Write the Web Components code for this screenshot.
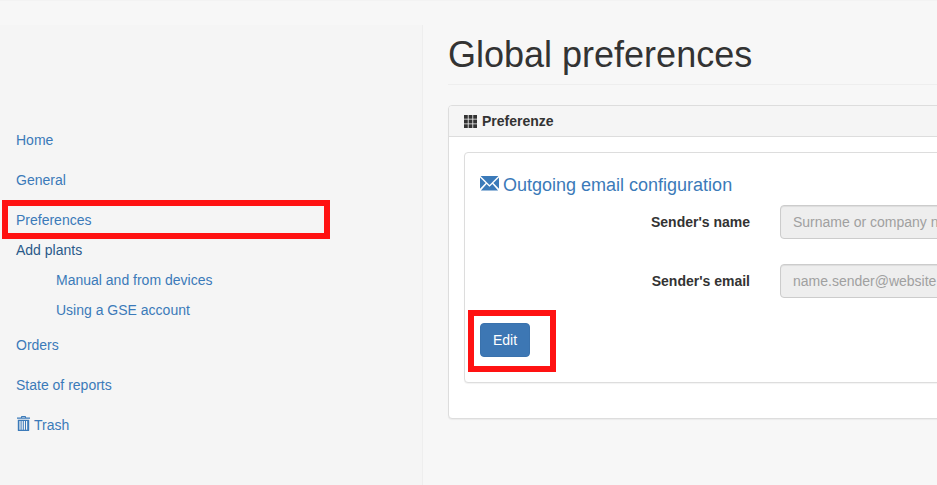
<!DOCTYPE html>
<html>
<head>
<meta charset="utf-8">
<title>Global preferences</title>
<style>
    html, body {
        margin: 0;
        height: 100%;
        overflow: hidden;
        background: #f7f7f7;
        color: #333;
        font: 14px/20px "Liberation Sans", Arial, sans-serif;
    }
</style>
</head>
<body>
<app-shell>
    <side-nav slot="side">
        <nav-item label="Home"></nav-item>
        <nav-item label="General"></nav-item>
        <nav-item label="Preferences" marked></nav-item>
        <nav-item label="Add plants" kind="open"></nav-item>
        <nav-item label="Manual and from devices" kind="sub"></nav-item>
        <nav-item label="Using a GSE account" kind="sub"></nav-item>
        <nav-item label="Orders" kind="after-sub"></nav-item>
        <nav-item label="State of reports"></nav-item>
        <nav-item label="Trash"><app-icon name="trash" slot="icon"></app-icon></nav-item>
    </side-nav>
    <page-title>Global preferences</page-title>
    <outer-panel heading="Preferenze">
        <email-settings>
            <form-row label="Sender's name" hint="Surname or company name"></form-row>
            <form-row label="Sender's email" hint="name.sender@website.com"></form-row>
        </email-settings>
    </outer-panel>
</app-shell>

<script>
const icons = {
    th: `<svg viewBox="0 0 13 13" width="13" height="13" fill="currentColor">
            <path d="M0 0h3.8v3.8H0zM4.6 0h3.8v3.8H4.6zM9.2 0H13v3.8H9.2zM0 4.6h3.8v3.8H0zM4.6 4.6h3.8v3.8H4.6zM9.2 4.6H13v3.8H9.2zM0 9.2h3.8V13H0zM4.6 9.2h3.8V13H4.6zM9.2 9.2H13V13H9.2z"/>
        </svg>`,
    envelope: `<svg viewBox="0 0 19 16" width="19" height="16" fill="currentColor">
            <path d="M.6 0h17.8L9.5 9z"/>
            <path d="M0 1.4v11.4L5.6 7z"/>
            <path d="M19 1.4v11.4L13.4 7z"/>
            <path d="M.9 14.4h17.2L12.4 8 9.5 10.8 6.6 8z"/>
        </svg>`,
    trash: `<svg viewBox="0 0 14 16" width="14" height="16" fill="currentColor">
            <path d="M5.4 0h4.2l.6 1.6H14v1.2H1V1.6h3.8zM6.2 .9h2.6l.2.7H6z" fill-rule="evenodd"/>
            <path d="M1.8 3.8h11.4v10.6c0 .4-.3.7-.7.7h-10c-.4 0-.7-.3-.7-.7zM3.4 5.1v8.7h1.2V5.1zM5.6 5.1v8.7h1.2V5.1zM7.8 5.1v8.7H9V5.1zM10 5.1v8.7h1.2V5.1z" fill-rule="evenodd"/>
        </svg>`
};

class AppIcon extends HTMLElement {
    connectedCallback() {
        this.attachShadow({ mode: 'open' });
        this.shadowRoot.innerHTML = `
            <style>
                :host { display: inline-block; line-height: 0; }
                svg { display: block; }
            </style>
            ${icons[this.getAttribute('name')]}
        `;
    }
}

const shellTemplate = document.createElement('template');
shellTemplate.innerHTML = `
    <style>
        :host {
            display: block;
            height: 485px;
            overflow: hidden;
        }
        .top {
            height: 24px;
            border-top: 1px solid #f3f3f3;
        }
        .columns {
            display: flex;
            height: 460px;
        }
        .main {
            flex: 0 0 auto;
            width: 1100px;
            padding: 10px 0 0 25px;
        }
    </style>
    <div class="top"></div>
    <div class="columns">
        <slot name="side"></slot>
        <div class="main"><slot></slot></div>
    </div>
`;

class AppShell extends HTMLElement {
    connectedCallback() {
        this.attachShadow({ mode: 'open' });
        this.shadowRoot.appendChild(shellTemplate.content.cloneNode(true));
    }
}

const sideTemplate = document.createElement('template');
sideTemplate.innerHTML = `
    <style>
        :host {
            display: block;
            flex: 0 0 422px;
            padding-top: 95px;
            background: #f5f5f5;
            border-right: 1px solid #eee;
        }
    </style>
    <slot></slot>
`;

class SideNav extends HTMLElement {
    connectedCallback() {
        this.attachShadow({ mode: 'open' });
        this.shadowRoot.appendChild(sideTemplate.content.cloneNode(true));
    }
}

const navTemplate = document.createElement('template');
navTemplate.innerHTML = `
    <style>
        :host {
            display: block;
            position: relative;
            padding: 10px 16px;
            color: #3b7ab9;
        }
        :host([kind="open"]) {
            padding: 0 16px 5px;
            color: #2a5a8a;
        }
        :host([kind="sub"]) {
            padding: 5px 16px 5px 56px;
        }
        a {
            display: flex;
            align-items: center;
            gap: 4px;
            color: inherit;
            text-decoration: none;
        }
        ::slotted(app-icon) {
            margin-bottom: 2px;
        }
        .mark {
            position: absolute;
            left: 2px;
            top: 0;
            width: 328px;
            height: 39px;
            box-sizing: border-box;
            border: 6px solid #ff1212;
        }
    </style>
    <a href="#"><slot name="icon"></slot><span id="label"></span></a>
`;

class NavItem extends HTMLElement {
    connectedCallback() {
        this.attachShadow({ mode: 'open' });
        this.shadowRoot.appendChild(navTemplate.content.cloneNode(true));
        this.shadowRoot.getElementById('label').innerText = this.getAttribute('label');
        if (this.hasAttribute('marked')) {
            let mark = document.createElement('div');
            mark.className = 'mark';
            this.shadowRoot.appendChild(mark);
        }
    }
}

const titleTemplate = document.createElement('template');
titleTemplate.innerHTML = `
    <style>
        :host {
            display: block;
            margin-bottom: 20px;
            padding-bottom: 9px;
            border-bottom: 1px solid #eee;
        }
        h1 {
            margin: 0;
            font-size: 36px;
            font-weight: 500;
            line-height: 40px;
            color: #333;
        }
    </style>
    <h1><slot></slot></h1>
`;

class PageTitle extends HTMLElement {
    connectedCallback() {
        this.attachShadow({ mode: 'open' });
        this.shadowRoot.appendChild(titleTemplate.content.cloneNode(true));
    }
}

const panelTemplate = document.createElement('template');
panelTemplate.innerHTML = `
    <style>
        :host {
            display: block;
            background: #fff;
            border: 1px solid #ddd;
            border-radius: 4px;
            box-shadow: 0 1px 1px rgba(0,0,0,.05);
        }
        .heading {
            display: flex;
            align-items: center;
            gap: 5px;
            padding: 5px 15px;
            font-weight: 700;
            color: #333;
            background: #f5f5f5;
            border-bottom: 1px solid #ddd;
            border-radius: 3px 3px 0 0;
        }
        .body {
            padding: 15px;
        }
    </style>
    <div class="heading"><app-icon name="th"></app-icon><span id="heading"></span></div>
    <div class="body"><slot></slot></div>
`;

class OuterPanel extends HTMLElement {
    connectedCallback() {
        this.attachShadow({ mode: 'open' });
        this.shadowRoot.appendChild(panelTemplate.content.cloneNode(true));
        this.shadowRoot.getElementById('heading').innerText = this.getAttribute('heading');
    }
}

const settingsTemplate = document.createElement('template');
settingsTemplate.innerHTML = `
    <style>
        :host {
            display: block;
            margin-bottom: 20px;
            padding: 15px 15px 25px;
            background: #fff;
            border: 1px solid #ddd;
            border-radius: 4px;
            box-shadow: 0 1px 1px rgba(0,0,0,.05);
        }
        h4 {
            display: flex;
            align-items: center;
            gap: 4px;
            margin: 7px 0 10px;
            font-size: 18px;
            font-weight: 500;
            line-height: 20px;
            color: #3b7ab9;
        }
        h4 app-icon {
            margin-bottom: 3px;
        }
        .rows {
            display: grid;
            row-gap: 25px;
        }
        .action {
            position: relative;
            margin-top: 25px;
        }
        button {
            display: block;
            padding: 6px 12px;
            font: inherit;
            color: #fff;
            background: #3d77b4;
            border: 1px solid #3a72ad;
            border-radius: 4px;
        }
        .mark {
            position: absolute;
            left: -12px;
            top: -13px;
            width: 88px;
            height: 62px;
            box-sizing: border-box;
            border: 6px solid #ff1212;
        }
    </style>
    <h4><app-icon name="envelope"></app-icon><span>Outgoing email configuration</span></h4>
    <div class="rows"><slot></slot></div>
    <div class="action">
        <button type="button">Edit</button>
        <div class="mark"></div>
    </div>
`;

class EmailSettings extends HTMLElement {
    connectedCallback() {
        this.attachShadow({ mode: 'open' });
        this.shadowRoot.appendChild(settingsTemplate.content.cloneNode(true));
    }
}

const rowTemplate = document.createElement('template');
rowTemplate.innerHTML = `
    <style>
        :host {
            display: grid;
            grid-template-columns: 270px 1fr;
            column-gap: 30px;
            align-items: center;
        }
        label {
            font-weight: 700;
            text-align: right;
        }
        .field {
            height: 34px;
            box-sizing: border-box;
            padding: 6px 12px;
            color: #a0a0a0;
            white-space: nowrap;
            background: #eee;
            border: 1px solid #ccc;
            border-radius: 4px;
            box-shadow: inset 0 1px 1px rgba(0,0,0,.075);
        }
    </style>
    <label id="label"></label>
    <div class="field" id="field"></div>
`;

class FormRow extends HTMLElement {
    connectedCallback() {
        this.attachShadow({ mode: 'open' });
        this.shadowRoot.appendChild(rowTemplate.content.cloneNode(true));
        this.shadowRoot.getElementById('label').innerText = this.getAttribute('label');
        this.shadowRoot.getElementById('field').innerText = this.getAttribute('hint');
    }
}

customElements.define('app-icon', AppIcon);
customElements.define('app-shell', AppShell);
customElements.define('side-nav', SideNav);
customElements.define('nav-item', NavItem);
customElements.define('page-title', PageTitle);
customElements.define('outer-panel', OuterPanel);
customElements.define('email-settings', EmailSettings);
customElements.define('form-row', FormRow);
</script>
</body>
</html>
